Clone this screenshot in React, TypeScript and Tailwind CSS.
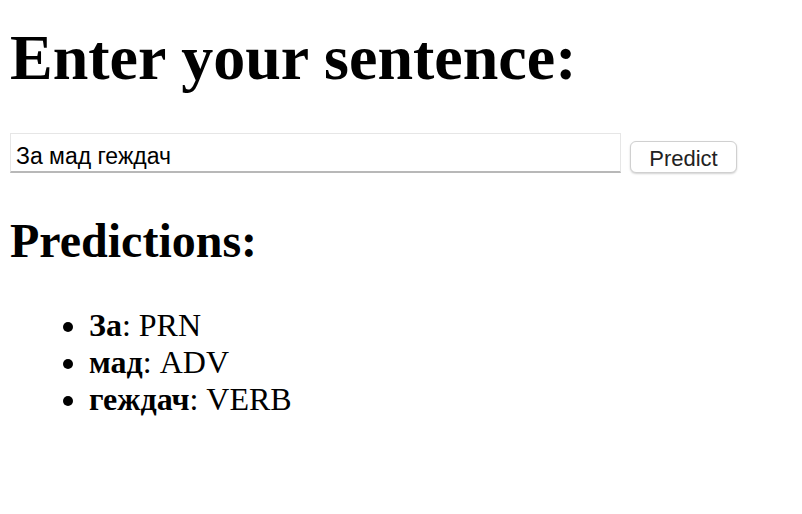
import * as React from 'react';

type Prediction = {
  word: string;
  tag: string;
};

const predictions: Prediction[] = [
  { word: 'За', tag: 'PRN' },
  { word: 'мад', tag: 'ADV' },
  { word: 'геждач', tag: 'VERB' },
];

const App = (): React.ReactNode => {
  const [sentence, setSentence] = React.useState('За мад геждач');

  return (
    <div className="min-h-screen bg-white px-[10px] pt-[21px] text-black font-['Liberation_Serif',_'Times_New_Roman',_serif]">
      <h1 className="text-[64px] leading-[74px] font-bold">Enter your sentence:</h1>

      <div className="mt-[38px] flex items-end gap-[9px]">
        <input
          className="h-[40px] w-[611px] border border-[#e6e6e6] border-b-[#b8b8b8] border-b-2 bg-white pl-[5px] pt-[7px] text-[23px] text-black outline-none font-['Liberation_Sans',_Arial,_sans-serif]"
          type="text"
          value={sentence}
          onChange={(e) => setSentence(e.target.value)}
        />
        <button
          className="h-[32px] w-[107px] rounded-md border border-[#d0d0d0] bg-white text-[22px] text-[#222] shadow-[0_1px_2px_rgba(0,0,0,0.18)] font-['Liberation_Sans',_Arial,_sans-serif]"
          type="button"
        >
          Predict
        </button>
      </div>

      <h2 className="mt-[40px] text-[48px] leading-[55px] font-bold">Predictions:</h2>

      <ul className="mt-[39px] list-disc pl-[79px] text-[32px] leading-[37px]">
        {predictions.map((p) => (
          <li key={p.word}>
            <strong>{p.word}</strong>: {p.tag}
          </li>
        ))}
      </ul>
    </div>
  );
};

export default App;
